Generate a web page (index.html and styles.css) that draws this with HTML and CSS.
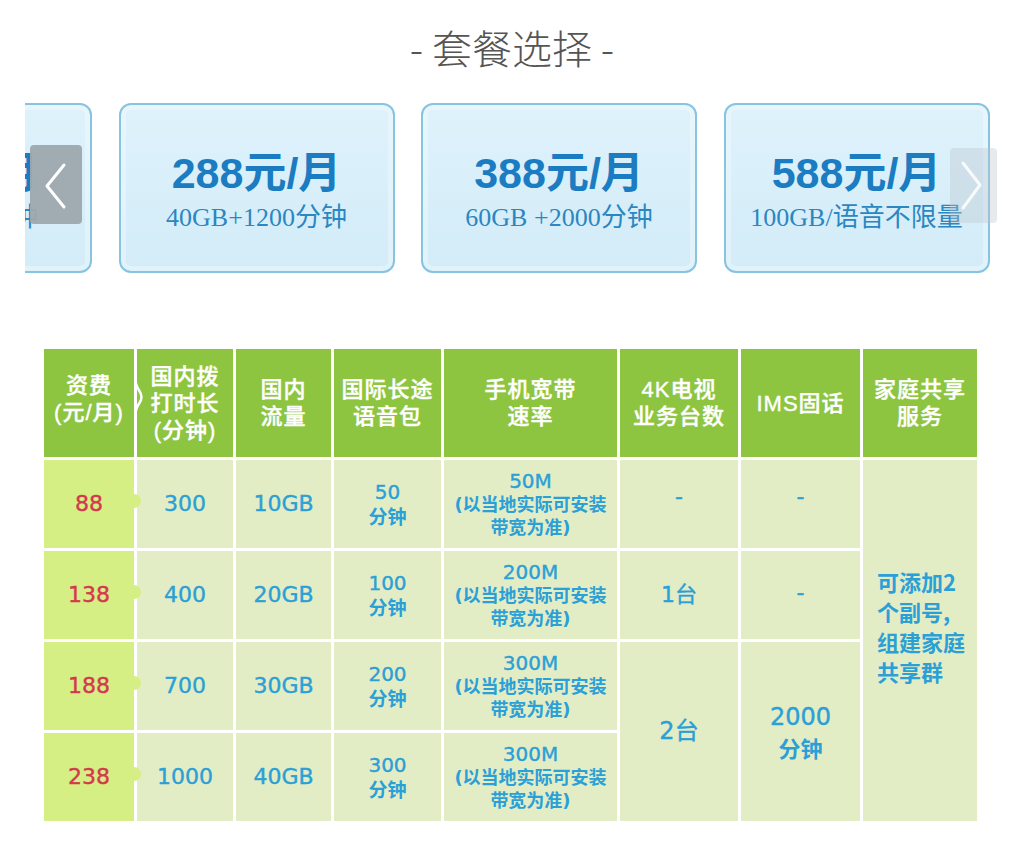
FILE: index.html
```html
<!DOCTYPE html>
<html lang="zh-CN">
<head>
<meta charset="utf-8">
<title>套餐选择</title>
<link rel="stylesheet" href="styles.css">
</head>
<body>
<h1 class="title">- 套餐选择 -</h1>

<div class="carousel">
  <div class="track">
    <div class="card"><div class="price">188元/月</div><div class="desc">30GB+700分钟</div></div>
    <div class="card"><div class="price">288元/月</div><div class="desc">40GB+1200分钟</div></div>
    <div class="card"><div class="price">388元/月</div><div class="desc">60GB +2000分钟</div></div>
    <div class="card card-last"><div class="price">588元/月</div><div class="desc">100GB/语音不限量</div></div>
  </div>
  <div class="arrow arrow-prev">
    <svg width="52" height="79" viewBox="0 0 52 79"><path d="M34 20 L17 41 L34 62" fill="none" stroke="#fff" stroke-width="3" stroke-linecap="round" stroke-linejoin="round"/></svg>
  </div>
  <div class="arrow arrow-next">
    <svg width="47" height="75" viewBox="0 0 47 75"><path d="M13 15 L30 37 L13 60" fill="none" stroke="rgba(255,255,255,0.85)" stroke-width="3" stroke-linecap="round" stroke-linejoin="round"/></svg>
  </div>
</div>

<div class="plan-table">
  <div class="th th-fee">资费<br>(元/月)
    <svg class="bracket" width="10" height="108" viewBox="0 0 10 108"><path d="M1.5 0 V30 C1.5 41 7.5 41 7.5 48 C7.5 55 1.5 55 1.5 66 V108" fill="none" stroke="#fff" stroke-width="2.5"/></svg>
  </div>
  <div class="th">国内拨<br>打时长<br>(分钟)</div>
  <div class="th">国内<br>流量</div>
  <div class="th">国际长途<br>语音包</div>
  <div class="th">手机宽带<br>速率</div>
  <div class="th">4K电视<br>业务台数</div>
  <div class="th">IMS固话</div>
  <div class="th">家庭共享<br>服务</div>

  <div class="td fee">88</div>
  <div class="td">300</div>
  <div class="td">10GB</div>
  <div class="td intl"><span>50</span><span class="bold">分钟</span></div>
  <div class="td speed"><span class="mb">50M</span><span class="note">(以当地实际可安装</span><span class="note">带宽为准)</span></div>
  <div class="td dash">-</div>
  <div class="td dash">-</div>
  <div class="td family">可添加2<br>个副号,<br>组建家庭<br>共享群</div>

  <div class="td fee">138</div>
  <div class="td">400</div>
  <div class="td">20GB</div>
  <div class="td intl"><span>100</span><span class="bold">分钟</span></div>
  <div class="td speed"><span class="mb">200M</span><span class="note">(以当地实际可安装</span><span class="note">带宽为准)</span></div>
  <div class="td">1台</div>
  <div class="td dash2">-</div>

  <div class="td fee">188</div>
  <div class="td">700</div>
  <div class="td">30GB</div>
  <div class="td intl"><span>200</span><span class="bold">分钟</span></div>
  <div class="td speed"><span class="mb">300M</span><span class="note">(以当地实际可安装</span><span class="note">带宽为准)</span></div>
  <div class="td span2 big">2台</div>
  <div class="td span2 big tv"><span>2000</span><span class="bold">分钟</span></div>

  <div class="td fee">238</div>
  <div class="td">1000</div>
  <div class="td">40GB</div>
  <div class="td intl"><span>300</span><span class="bold">分钟</span></div>
  <div class="td speed"><span class="mb">300M</span><span class="note">(以当地实际可安装</span><span class="note">带宽为准)</span></div>
</div>
</body>
</html>
```

FILE: styles.css
```css
* {
  box-sizing: border-box;
}

body {
  margin: 0;
  width: 1024px;
  background: #fff;
  font-family: "Noto Sans CJK SC", sans-serif;
}

.title {
  margin: 27px 0 0;
  font-size: 40px;
  line-height: 40px;
  font-weight: 300;
  color: #555;
  text-align: center;
}

/* carousel */
.carousel {
  position: relative;
  margin: 36px 0 0 25px;
  width: 975px;
  height: 170px;
  overflow: hidden;
}

.track {
  display: flex;
  gap: 26.5px;
  margin-left: -209px;
  height: 100%;
}

.card {
  flex: 0 0 276px;
  height: 170px;
  border: 2px solid #86c4e0;
  border-radius: 12px;
  background: linear-gradient(#def2fb, #d3ecf8);
  box-shadow: inset 0 0 0 5px rgba(255, 255, 255, 0.3);
  display: flex;
  flex-direction: column;
  align-items: center;
  justify-content: center;
  gap: 6px;
  padding-top: 6px;
}

.card-last {
  flex-basis: 266px;
}

.price {
  font-family: "Liberation Sans", "Noto Sans CJK SC", sans-serif;
  font-weight: 700;
  font-size: 43px;
  line-height: 48px;
  color: #1b7cc1;
  white-space: nowrap;
}

.desc {
  font-family: "Liberation Serif", "Noto Sans CJK SC", serif;
  font-size: 26px;
  line-height: 30px;
  color: #2a87c2;
  white-space: nowrap;
}

.arrow {
  position: absolute;
  border-radius: 4px;
  display: flex;
}

.arrow-prev {
  left: 5px;
  top: 42px;
  width: 52px;
  height: 79px;
  background: rgba(158, 168, 174, 0.95);
}

.arrow-next {
  left: 925px;
  top: 45px;
  width: 47px;
  height: 75px;
  background: rgba(185, 195, 203, 0.35);
}

/* table */
.plan-table {
  display: grid;
  margin: 76px 0 0 44px;
  width: 933px;
  grid-template-columns: 90px 96px 95px 107px 173px 118px 119px 114px;
  grid-template-rows: 108px repeat(4, 88px);
  gap: 3px;
  background: #fff;
  box-shadow: 0 10px 10px -6px rgba(0, 0, 0, 0.04);
}

.th {
  background: #8dc540;
  color: #fff;
  display: flex;
  align-items: center;
  justify-content: center;
  text-align: center;
  font-family: "Liberation Sans", "Noto Sans CJK SC", sans-serif;
  font-size: 22px;
  line-height: 27px;
  letter-spacing: 1px;
  font-weight: 500;
  -webkit-text-stroke: 0.4px #fff;
}

.th-fee {
  position: relative;
  padding-bottom: 8px;
}

.bracket {
  position: absolute;
  left: 100%;
  top: 0;
  z-index: 2;
}

.td {
  background: #e2edc6;
  color: #2ba0d6;
  display: flex;
  flex-direction: column;
  align-items: center;
  justify-content: center;
  text-align: center;
  font-family: "DejaVu Sans", "Noto Sans CJK SC", sans-serif;
  font-size: 22px;
  line-height: 26px;
  -webkit-text-stroke: 0.4px currentColor;
}

.fee {
  position: relative;
  background: #d6ef84;
  color: #d4384f;
}

.fee::after {
  content: "";
  position: absolute;
  right: -7px;
  top: calc(50% - 10px);
  width: 14px;
  height: 14px;
  border-radius: 50%;
  background: #d6ef84;
  z-index: 1;
}

.intl {
  font-size: 20px;
  line-height: 23px;
}

.intl .bold {
  font-size: 19px;
}

.bold {
  font-family: "Noto Sans CJK SC", sans-serif;
  font-weight: 700;
  -webkit-text-stroke: 0;
}

.speed .mb {
  font-size: 20px;
  line-height: 23px;
}

.speed .note {
  font-size: 18px;
  line-height: 23px;
  font-weight: 700;
  white-space: nowrap;
  -webkit-text-stroke: 0;
}

.dash {
  padding-bottom: 14px;
}

.dash2 {
  padding-bottom: 4px;
}

.span2 {
  grid-row: span 2;
}

.big {
  font-size: 24px;
  line-height: 27px;
}

.tv {
  line-height: 30px;
}

.tv .bold {
  font-size: 22px;
}

.family {
  grid-column: 8;
  grid-row: 2 / span 4;
  align-items: flex-start;
  text-align: left;
  padding: 0 0 30px 14px;
  font-family: "Noto Sans CJK SC", sans-serif;
  font-weight: 700;
  font-size: 22px;
  line-height: 30px;
  -webkit-text-stroke: 0;
}
```
